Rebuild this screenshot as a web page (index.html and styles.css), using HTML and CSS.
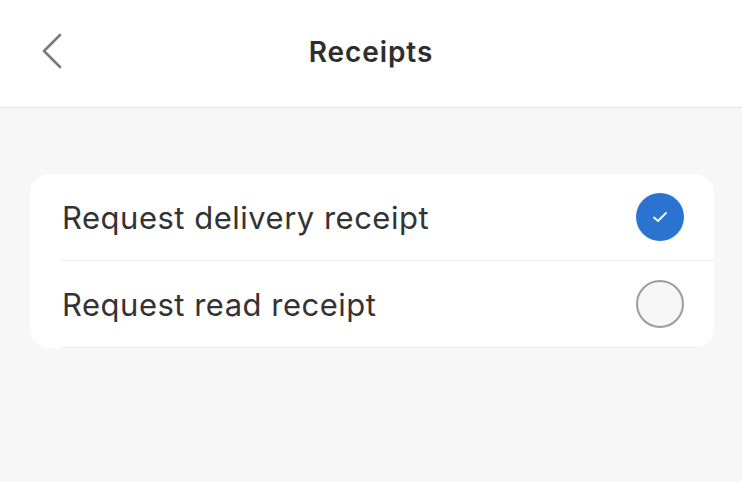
FILE: index.html
```html
<!DOCTYPE html>
<html lang="en">
<head>
  <meta charset="UTF-8" />
  <meta name="viewport" content="width=device-width, initial-scale=1.0" />
  <title>Receipts</title>
  <link rel="stylesheet" href="styles.css">
</head>
<body>
  <header>
    <a class="back" href="#" aria-label="Back">
      <svg width="22" height="36" viewBox="0 0 22 36">
        <path d="M19 2 L3 18 L19 34" fill="none" stroke="#7a7a7a" stroke-width="2.6" stroke-linecap="round" stroke-linejoin="round"/>
      </svg>
    </a>
    <h1>Receipts</h1>
  </header>

  <main>
    <div class="card">
      <div class="row">
        <span class="label">Request delivery receipt</span>
        <span class="radio checked">
          <svg width="16" height="12" viewBox="0 0 16 12">
            <path d="M2 6.5 L6 10 L14 2" fill="none" stroke="#fff" stroke-width="1.8" stroke-linecap="round" stroke-linejoin="round"/>
          </svg>
        </span>
      </div>
      <div class="row">
        <span class="label">Request read receipt</span>
        <span class="radio"></span>
      </div>
    </div>
  </main>
</body>
</html>
```

FILE: styles.css
```css
body {
  font-family: 'Inter', 'Roboto', sans-serif;
  background-color: #f7f7f7;
  color: #333;
  margin: 0;
  padding: 0;
  height: 482px;
}
header {
  position: relative;
  height: 103px;
  padding-bottom: 4px;
  background-color: #ffffff;
  border-bottom: 1px solid #e9e9e9;
  display: flex;
  align-items: center;
  justify-content: center;
}
.back {
  position: absolute;
  left: 41px;
  top: 33px;
  display: block;
}
h1 {
  margin: 0;
  font-size: 28px;
  font-weight: 600;
  color: #2e2e2e;
  letter-spacing: 0.9px;
}
main {
  padding: 66px 28px 0 30px;
}
.card {
  background: #fff;
  border-radius: 20px;
  overflow: hidden;
}
.row {
  display: flex;
  align-items: center;
  justify-content: space-between;
  height: 86px;
  margin-left: 32px;
  padding-right: 30px;
  border-bottom: 1px solid #ececec;
}
.label {
  font-size: 31px;
  color: #333;
  letter-spacing: 0.5px;
}
.radio {
  width: 44px;
  height: 44px;
  border-radius: 50%;
  border: 2px solid #9c9c9c;
  background: #f6f6f6;
  display: flex;
  align-items: center;
  justify-content: center;
}
.radio.checked {
  width: 48px;
  height: 48px;
  border: none;
  background: #2b73d1;
}
```
